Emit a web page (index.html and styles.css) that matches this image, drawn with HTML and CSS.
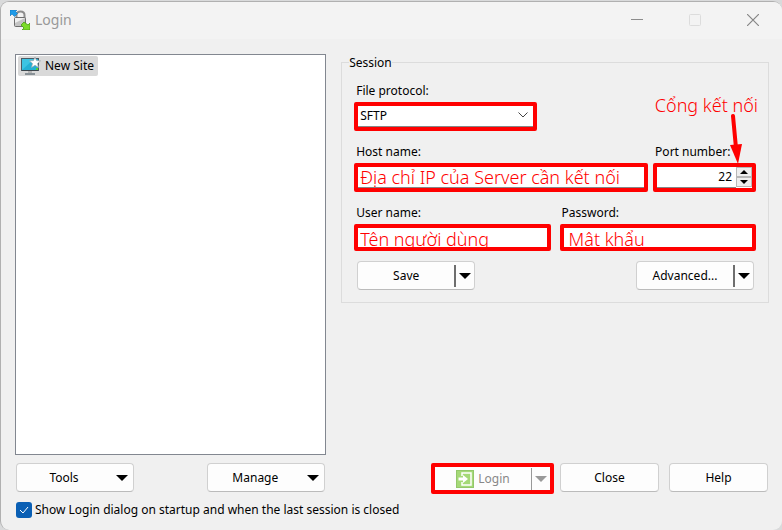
FILE: index.html
```html
<!DOCTYPE html>
<html lang="vi">
<head>
  <meta charset="UTF-8">
  <meta name="viewport" content="width=device-width, initial-scale=1.0">
  <title>Login</title>
  <link rel="stylesheet" href="styles.css">
</head>
<body>
  <div class="dialog">
    <header class="titlebar">
      <svg class="app-icon" width="20" height="20" viewBox="0 0 20 20">
        <path d="M6.500 9V5q0-3.500 4-3.500t4 3.500v4" fill="none" stroke="#8e8e8e" stroke-width="2"/>
        <path d="M0 0h7L5.500 1.500l2 2-3 3-2.500-2.500L0 6z" fill="#1e9be8" stroke="#1473b8" stroke-width="0.6"/>
        <rect x="4.500" y="7.500" width="11" height="9" rx="1" fill="#c4c4c4" stroke="#6e6e6e"/>
        <path d="M5 8h10L5 13z" fill="#f0f0f0"/>
        <path d="M20 20h-8l2-2-3-3 3-3 4 3 2-2z" fill="#7bdc28" stroke="#4a9a12" stroke-width="0.8"/>
      </svg>
      <h1>Login</h1>
      <button class="window-btn" aria-label="Minimize">
        <svg width="12" height="12" viewBox="0 0 12 12"><path d="M0 5.500h12" stroke="#8c8c8c"/></svg>
      </button>
      <button class="window-btn" aria-label="Maximize" disabled>
        <svg width="12" height="12" viewBox="0 0 12 12"><rect x="0.500" y="0.500" width="11" height="11" rx="1" fill="none" stroke="#dcdcdc"/></svg>
      </button>
      <button class="window-btn" aria-label="Close window">
        <svg width="12" height="12" viewBox="0 0 12 12"><path d="M0 0l12 12M12 0L0 12" stroke="#868686" stroke-width="1.200"/></svg>
      </button>
    </header>

    <main class="content">
      <div class="sites">
        <button class="site">
          <svg width="20" height="18" viewBox="0 0 20 18">
            <rect x="0.500" y="1.500" width="17" height="12" fill="#24b0d4" stroke="#4b5a64"/>
            <path d="M1 13V2h12z" fill="#3cc4e2"/>
            <path d="M1 13.500h16" stroke="#3d464c"/>
            <path d="M15 12h2" stroke="#5fe000" stroke-width="1.500"/>
            <path d="M7 14h4v2H7z" fill="#b5b5b5"/>
            <path d="M4 17h10" stroke="#6c7880" stroke-width="1.500"/>
            <path d="M14 0l1.500 3.600 4 .3-3 2.600 1 4-3.500-2.200-3.500 2.200 1-4-3-2.600 4-.3z" fill="#fff" stroke="#9aa5ab" stroke-width="0.7"/>
          </svg>
          New Site
        </button>
      </div>

      <fieldset class="session">
        <legend>Session</legend>
        <div class="row">
          <div class="field protocol">
            <label for="protocol">File protocol:</label>
            <div class="frame">
              <select id="protocol"><option>SFTP</option></select>
              <svg class="chevron" width="10" height="6" viewBox="0 0 10 6"><path d="M0.500 0.500L5 5l4.500-4.500" fill="none" stroke="#444"/></svg>
            </div>
          </div>
        </div>
        <div class="row">
          <div class="field host">
            <label for="host">Host name:</label>
            <div class="frame"><input class="note" id="host" type="text" value="Địa chỉ IP của Server cần kết nối"></div>
          </div>
          <div class="field port">
            <label for="port">Port number:</label>
            <div class="frame">
              <input id="port" type="text" value="22">
              <div class="spinner">
                <button aria-label="Increase"><svg width="8" height="4" viewBox="0 0 8 4"><path d="M0 4l4-4 4 4z"/></svg></button>
                <button aria-label="Decrease"><svg width="8" height="4" viewBox="0 0 8 4"><path d="M0 0h8L4 4z"/></svg></button>
              </div>
            </div>
            <div class="callout">
              <span>Cổng kết nối</span>
              <svg width="14" height="50" viewBox="0 0 14 50"><path d="M4 2l3 32" stroke="#f00" stroke-width="4" stroke-linecap="round"/><path d="M1 31l12-1-4 20z" fill="#f00"/></svg>
            </div>
          </div>
        </div>
        <div class="row credentials">
          <div class="field">
            <label for="user">User name:</label>
            <div class="frame"><input class="note" id="user" type="text" value="Tên người dùng"></div>
          </div>
          <div class="field">
            <label for="password">Password:</label>
            <div class="frame"><input class="note" id="password" type="text" value="Mât khẩu"></div>
          </div>
        </div>
        <div class="actions">
          <button class="btn split">
            <span>Save</span><i></i>
            <svg class="arrow" width="12" height="6" viewBox="0 0 12 6"><path d="M0 0h12L6 6z"/></svg>
          </button>
          <button class="btn split">
            <span>Advanced...</span><i></i>
            <svg class="arrow" width="12" height="6" viewBox="0 0 12 6"><path d="M0 0h12L6 6z"/></svg>
          </button>
        </div>
      </fieldset>
    </main>

    <footer class="footer">
      <div class="left">
        <button class="btn menu">
          <span>Tools</span>
          <svg class="arrow" width="12" height="6" viewBox="0 0 12 6"><path d="M0 0h12L6 6z"/></svg>
        </button>
        <button class="btn menu">
          <span>Manage</span>
          <svg class="arrow" width="12" height="6" viewBox="0 0 12 6"><path d="M0 0h12L6 6z"/></svg>
        </button>
      </div>
      <div class="right">
        <button class="btn split login" disabled>
          <span>
            <svg width="18" height="18" viewBox="0 0 18 18">
              <rect x="0.500" y="0.500" width="17" height="17" fill="#a5d977" stroke="#93c76a"/>
              <path d="M6 6V3h9v12H6v-3" fill="none" stroke="#fff" stroke-width="1.500"/>
              <path d="M2.500 7.500H7V5l5 4-5 4v-2.500H2.500z" fill="#fff"/>
            </svg>
            Login
          </span><i></i>
          <svg class="arrow" width="12" height="6" viewBox="0 0 12 6"><path d="M0 0h12L6 6z"/></svg>
        </button>
        <button class="btn">Close</button>
        <button class="btn">Help</button>
      </div>
    </footer>

    <label class="startup">
      <span class="check">
        <input type="checkbox" checked>
        <svg width="10" height="8" viewBox="0 0 10 8"><path d="M1 4l3 3 5-6" fill="none" stroke="#fff"/></svg>
      </span>
      Show Login dialog on startup and when the last session is closed
    </label>
  </div>
</body>
</html>
```
FILE: styles.css
```css
* {
  box-sizing: border-box;
}

body {
  margin: 0;
  padding-top: 1px;
  height: 100vh;
  background: #d9dadb;
  font-family: 'Noto Sans', sans-serif;
  font-size: 12px;
  line-height: 16px;
  color: #000;
}

button, input, select {
  font: inherit;
  color: inherit;
  margin: 0;
}

svg {
  flex: none;
}

.dialog {
  display: flex;
  flex-direction: column;
  height: 100%;
  border: 1px solid #b0b0b0;
  border-width: 1px 0 0 1px;
  border-radius: 9px;
  background: #f0f0f0;
  overflow: hidden;
}

.titlebar {
  display: flex;
  align-items: center;
  height: 37px;
  padding: 0 0 1px 9px;
  background: #f3f3f3;
}

.titlebar h1 {
  flex: 1;
  margin: 0 0 0 5px;
  font-size: 14px;
  font-weight: 400;
  line-height: 20px;
  color: #999;
}

.window-btn {
  display: flex;
  align-items: center;
  justify-content: center;
  width: 58px;
  height: 100%;
  padding: 0;
  border: 0;
  background: none;
}

.content {
  flex: 1;
  display: grid;
  grid-template-columns: 8fr 11fr;
  gap: 15px;
  padding: 15px 13px 0 14px;
}

.sites {
  padding: 1px 2px;
  background: #fff;
  border: 1px solid #828790;
}

.site {
  display: flex;
  align-items: center;
  gap: 4px;
  height: 20px;
  padding: 0 4px 0 3px;
  border: 0;
  border-radius: 2px;
  background: #d9d9d9;
}

/* session group */
.session {
  align-self: start;
  min-width: 0;
  margin: 0;
  padding: 12px;
  border: 1px solid #dcdcdc;
}

.session legend {
  margin-left: -5px;
  padding: 1px 0 0;
}

.row {
  display: flex;
  gap: 5px;
  margin-bottom: 13px;
}

.row.credentials {
  gap: 9px;
  margin-bottom: 10px;
}

.field {
  position: relative;
  flex: 1;
  min-width: 0;
}

.field.protocol {
  flex: 0 0 183px;
}

.field.host {
  flex: 20;
}

.field.port {
  flex: 7;
}

.field label {
  display: block;
  padding-left: 2px;
  margin-bottom: 3px;
}

.frame {
  position: relative;
  display: flex;
  height: 29px;
  border: 4px solid #f00;
  border-radius: 2px;
  background: #fff;
}

.credentials .frame {
  height: 27px;
}

.frame input,
.frame select {
  flex: 1;
  width: 100%;
  min-width: 0;
  padding: 0 2px;
  border: 0;
  border-bottom: 1px solid #868686;
  background: none;
  outline: none;
  appearance: none;
}

.credentials .frame input {
  padding-top: 2px;
  border-bottom: 0;
}

.credentials #password {
  padding-left: 5px;
}

.chevron {
  position: absolute;
  right: 5px;
  top: 6px;
}

.frame .note,
.callout {
  font-size: 18px;
  font-weight: 300;
  color: #f00;
}

.frame #port {
  padding-right: 4px;
  text-align: right;
}

.spinner {
  display: flex;
  flex-direction: column;
  width: 16px;
  padding-bottom: 1px;
}

.spinner button {
  display: flex;
  flex: 1;
  align-items: center;
  justify-content: center;
  padding: 0;
  border: 1px solid #b8b8b8;
  background: #eee;
}

.callout {
  position: absolute;
  right: -2px;
  bottom: 28px;
  line-height: 22px;
  white-space: nowrap;
}

.callout svg {
  display: block;
  margin: -2px 15px 0 auto;
}

/* buttons */
.btn {
  display: flex;
  align-items: center;
  justify-content: center;
  height: 29px;
  padding: 0;
  border: 1px solid #d0d0d0;
  border-bottom-color: #bbb;
  border-radius: 4px;
  background: #fdfdfd;
}

.btn span {
  display: flex;
  flex: 1;
  align-items: center;
  justify-content: center;
  gap: 4px;
}

.split i {
  width: 2px;
  height: 22px;
  background: #6e6e6e;
}

.split .arrow {
  margin: 0 3px;
}

.menu .arrow {
  margin: 0 5px;
}

.actions {
  display: flex;
  justify-content: space-between;
  padding: 0 2px 0 3px;
}

.actions .btn {
  width: 118px;
}

.footer {
  display: grid;
  grid-template-columns: 8fr 11fr;
  gap: 15px;
  padding: 8px 14px 0 15px;
}

.left,
.right {
  display: flex;
  justify-content: space-between;
}

.left {
  padding-right: 1px;
}

.left .btn {
  width: 118px;
}

.right {
  justify-content: flex-end;
  gap: 10px;
}

.right .btn {
  width: 99px;
}

.right .login {
  width: 123px;
  height: 31px;
  margin-right: -4px;
  border: 4px solid #f00;
  border-radius: 2px;
  color: #888;
}

.login i {
  width: 1px;
  background: #999;
}

.login .arrow {
  fill: #999;
}

.startup {
  display: flex;
  align-items: center;
  gap: 3px;
  padding: 8px 15px 12px;
}

.check {
  display: grid;
  place-items: center;
}

.check > * {
  grid-area: 1 / 1;
}

.check input {
  appearance: none;
  width: 16px;
  height: 16px;
  border-radius: 3px;
  background: #ccc;
}

.check input:checked {
  background: #0a5fb4;
}

.check svg {
  z-index: 1;
  pointer-events: none;
}
```
